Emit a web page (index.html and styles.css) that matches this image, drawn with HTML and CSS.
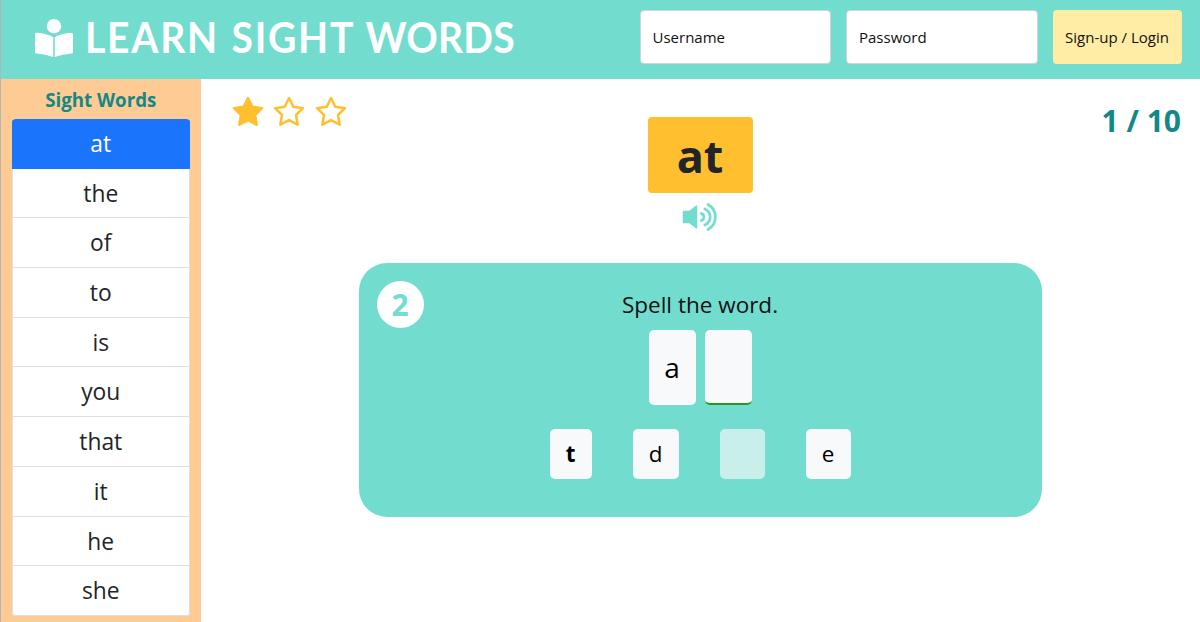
FILE: index.html
```html
<!DOCTYPE html>
<html lang="en">
<head>
<meta charset="utf-8">
<title>Learn Sight Words</title>
<link rel="stylesheet" href="styles.css">
</head>
<body>
<header class="header">
  <svg class="logo" viewBox="0 0 38 38"><circle cx="19" cy="7.2" r="7.2"/><path d="M0 15.3Q0 13.6 1.8 13.8Q12 14.5 18.2 18.2V38Q11 35.2 1.6 34.6Q0 34.5 0 33ZM38 15.3Q38 13.6 36.2 13.8Q26 14.5 19.8 18.2V38Q27 35.2 36.4 34.6Q38 34.5 38 33Z"/></svg>
  <h1 class="title"><span class="learn">LEARN</span> <span class="sight">SIGHT</span> <span class="words">WORDS</span></h1>
  <form class="login">
    <input class="field" type="text" placeholder="Username">
    <input class="field" type="password" placeholder="Password">
    <button class="submit" type="button">Sign-up / Login</button>
  </form>
</header>
<div class="layout">
  <aside class="sidebar">
    <h2 class="side-title">Sight Words</h2>
    <ul class="list">
      <li class="item active">at</li><li class="item">the</li><li class="item">of</li><li class="item">to</li><li class="item">is</li><li class="item">you</li><li class="item">that</li><li class="item">it</li><li class="item">he</li><li class="item">she</li>
    </ul>
  </aside>
  <main class="main">
    <div class="stars">
      <svg class="star filled" viewBox="0 0 32 31"><path d="M16 2L20.3 10.8L30 12.2L23 19L24.7 28.7L16 24.1L7.3 28.7L9 19L2 12.2L11.7 10.8Z"/></svg>
      <svg class="star" viewBox="0 0 32 31"><path d="M16 2L20.3 10.8L30 12.2L23 19L24.7 28.7L16 24.1L7.3 28.7L9 19L2 12.2L11.7 10.8Z"/></svg>
      <svg class="star" viewBox="0 0 32 31"><path d="M16 2L20.3 10.8L30 12.2L23 19L24.7 28.7L16 24.1L7.3 28.7L9 19L2 12.2L11.7 10.8Z"/></svg>
    </div>
    <section class="activity">
      <div class="word">at</div>
      <svg class="speaker" viewBox="0 0 36 30"><path class="horn" d="M1.5 9.5H7.5L14.5 4V26L7.5 20.5H1.5Z"/><path class="wave" d="M19.3 11.5Q21.9 12.5 21.9 15T19.3 18.5M22.8 7C30 10.5 30 19.5 22.8 23M26 2.5C35.8 8 35.8 22 26 27.5"/></svg>
      <div class="panel">
        <div class="step">2</div>
        <p class="prompt">Spell the word.</p>
        <div class="slots"><span class="slot">a</span><span class="slot next"></span></div>
        <div class="letters"><button class="letter bold">t</button><button class="letter d">d</button><button class="letter used" disabled></button><button class="letter e">e</button></div>
      </div>
    </section>
    <div class="progress">1 / 10</div>
  </main>
</div>
</body>
</html>
```
FILE: styles.css
```css
* { box-sizing: border-box; }
body {
  margin: 0;
  height: 622px;
  overflow: hidden;
  border-left: 1px solid #b1b5b4;
  background: #fff;
  color: #212529;
  font-family: "Open Sans", "Noto Sans", sans-serif;
}
.header {
  display: flex;
  align-items: flex-start;
  height: 79px;
  padding: 10px 18.5px 0 34px;
  background: #72ddce;
}
.logo { flex: none; width: 38px; height: 38px; margin-top: 9px; fill: #fff; }
.title {
  display: flex;
  width: 480px;
  margin: 0 0 0 12px;
  color: #fff;
  font: 700 42.5px/54px Lato, sans-serif;
  white-space: nowrap;
  transform: scaleX(.92);
  transform-origin: left;
}
.learn { flex: none; width: 159.2px; letter-spacing: 1.9px; }
.sight { flex: none; width: 145.7px; letter-spacing: 1.9px; }
.words { letter-spacing: .2px; }
.login { display: flex; gap: 15px; margin-left: auto; }
.field {
  width: 191.5px;
  height: 54px;
  padding: 0 12px 1px;
  border: 1px solid #ced4da;
  border-radius: 4px;
  background: #fff;
  font: 15px "Open Sans", sans-serif;
}
.field::placeholder { color: #111; opacity: 1; }
.submit {
  width: 129px;
  height: 54px;
  padding: 0 0 1px;
  border: 0;
  border-radius: 4px;
  background: #ffeca5;
  color: #111;
  font: 15px "Open Sans", sans-serif;
}
.layout { display: flex; height: 543px; }
.sidebar { width: 199.5px; flex: none; padding: 7px 11px 0; background: #ffcb94; }
.side-title {
  margin: 0 0 6px;
  color: #138886;
  font-size: 18.7px;
  line-height: 27px;
  text-align: center;
}
.list {
  display: grid;
  grid-template-rows: repeat(10, 49.7px);
  margin: 0;
  padding: 0;
  overflow: hidden;
  border-radius: 4px;
  background: #fff;
  list-style: none;
}
.item {
  border: 1px solid #dfdfdf;
  border-top: 0;
  font-size: 22.8px;
  line-height: 49px;
  text-align: center;
}
.item:last-child { border-radius: 0 0 4px 4px; }
.active { border-color: #1b74fc; background: #1b74fc; color: #fff; }
.main {
  display: grid;
  flex: 1;
  grid-template-columns: 158px 683px 1fr;
  padding-right: 19px;
}
.stars { display: flex; gap: 9.6px; padding: 17px 0 0 31px; }
.star { flex: none; width: 32px; height: 31px; fill: none; stroke: #ffbf2f; stroke-width: 2.5; stroke-linejoin: round; }
.filled { fill: #ffbf2f; }
.activity { display: flex; flex-direction: column; align-items: center; }
.word {
  width: 105px;
  height: 76px;
  margin-top: 38px;
  border-radius: 4px;
  background: #ffbf2f;
  font-size: 45px;
  font-weight: 700;
  line-height: 78px;
  text-align: center;
}
.speaker { width: 36px; height: 30px; margin-top: 9px; }
.horn { fill: #72ddce; stroke: #72ddce; stroke-width: 1.5; stroke-linejoin: round; }
.wave { fill: none; stroke: #72ddce; stroke-width: 2.7; stroke-linecap: round; }
.panel {
  position: relative;
  display: flex;
  flex-direction: column;
  align-items: center;
  width: 683px;
  height: 253.5px;
  margin-top: 31px;
  padding-top: 26px;
  border-radius: 28px;
  background: #72ddce;
  color: #111;
}
.step {
  position: absolute;
  top: 18px;
  left: 18px;
  width: 47px;
  height: 47px;
  border-radius: 50%;
  background: #fff;
  color: #72ddce;
  font-size: 30px;
  font-weight: 700;
  line-height: 48px;
  text-align: center;
}
.prompt { margin: 0; font-size: 22.5px; line-height: 31px; }
.slots { display: flex; gap: 9px; margin-top: 10px; }
.slot {
  width: 47px;
  height: 75px;
  border-radius: 5px;
  background: #f8f9fb;
  color: #000;
  font-size: 28px;
  line-height: 75px;
  text-align: center;
}
.next { border-bottom: 2px solid #25991d; }
.letters { display: flex; gap: 41px; margin-top: 23.5px; }
.letter {
  width: 42px;
  height: 50.5px;
  padding: 0 0 1px;
  border: 0;
  border-radius: 5px;
  background: #f8f9fb;
  color: #000;
  font: 22.4px "Open Sans", sans-serif;
}
.letter.bold { font-weight: 700; }
.d { width: 46px; }
.e { width: 45px; }
.used { width: 45px; background: #c8efea; }
.progress {
  padding-top: 21px;
  color: #138886;
  font-size: 30px;
  font-weight: 700;
  line-height: 42px;
  text-align: right;
}
```
